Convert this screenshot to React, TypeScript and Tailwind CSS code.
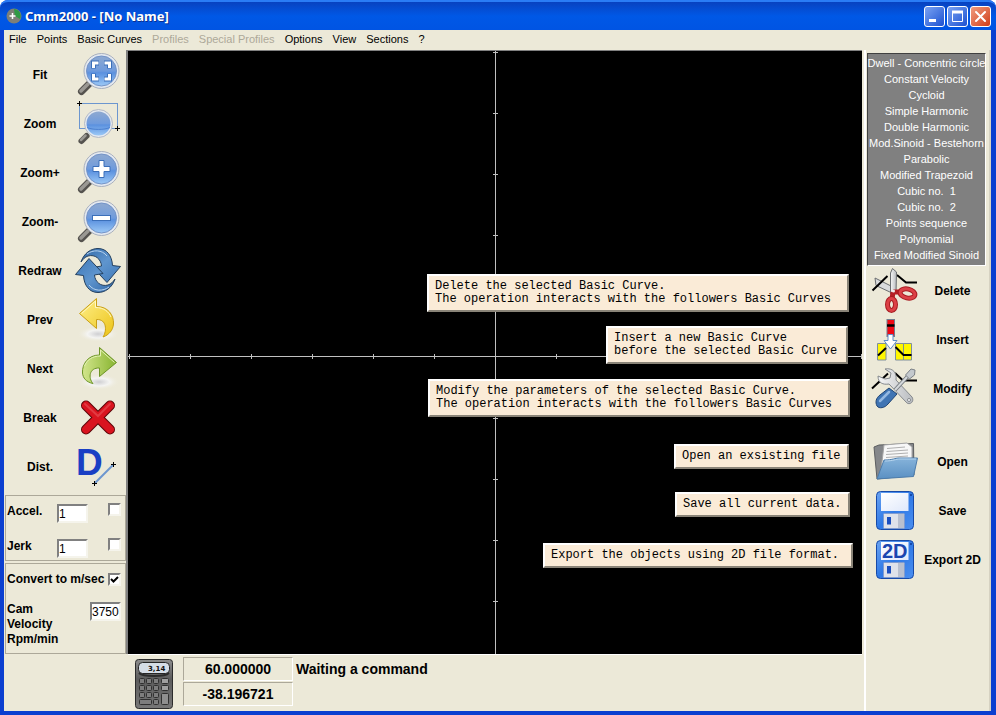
import React from 'react';

const basicCurves = [
  'Dwell - Concentric circle',
  'Constant Velocity',
  'Cycloid',
  'Simple Harmonic',
  'Double Harmonic',
  'Mod.Sinoid - Bestehorn',
  'Parabolic',
  'Modified Trapezoid',
  'Cubic no.  1',
  'Cubic no.  2',
  'Points sequence',
  'Polynomial',
  'Fixed Modified Sinoid',
];

const menuItems = [
  { label: 'File' },
  { label: 'Points' },
  { label: 'Basic Curves' },
  { label: 'Profiles', disabled: true },
  { label: 'Special Profiles', disabled: true },
  { label: 'Options' },
  { label: 'View' },
  { label: 'Sections' },
  { label: '?' },
];

const hints = [
  { text: 'Delete the selected Basic Curve.\nThe operation interacts with the followers Basic Curves', place: 'top-[223px] right-[13px] w-[422px]' },
  { text: 'Insert a new Basic Curve\nbefore the selected Basic Curve', place: 'top-[275px] right-[14px] w-[242px]' },
  { text: 'Modify the parameters of the selected Basic Curve.\nThe operation interacts with the followers Basic Curves', place: 'top-[328px] right-[12px] w-[422px]' },
  { text: 'Open an exsisting file', place: 'top-[393px] right-[13px] w-[175px]' },
  { text: 'Save all current data.', place: 'top-[441px] right-[12px] w-[175px]' },
  { text: 'Export the objects using 2D file format.', place: 'top-[492px] right-[9px] w-[310px]' },
];

const Icon = ({ children }: { children: React.ReactNode }) => (
  <svg width="48" height="48" viewBox="0 0 48 48" className="shrink-0" aria-hidden="true">
    {children}
  </svg>
);

// Gradients shared by all the icons
const IconDefs = () => (
  <svg width="0" height="0" className="absolute" aria-hidden="true">
    <defs>
      <linearGradient id="lens" x1="0" y1="0" x2="0" y2="1">
        <stop offset="0" stopColor="#8ea9d0" />
        <stop offset=".5" stopColor="#6f9bdd" />
        <stop offset=".56" stopColor="#5b91df" />
        <stop offset="1" stopColor="#9cc9f6" />
      </linearGradient>
      <linearGradient id="blueArrow" x1="0" y1="0" x2="1" y2="1">
        <stop offset="0" stopColor="#2f66a5" />
        <stop offset=".5" stopColor="#5f95ce" />
        <stop offset="1" stopColor="#3e78b8" />
      </linearGradient>
      <linearGradient id="yellowArrow" x1="0" y1="0" x2="1" y2="1">
        <stop offset="0" stopColor="#fff08a" />
        <stop offset="1" stopColor="#ecc317" />
      </linearGradient>
      <linearGradient id="greenArrow" x1="0" y1="0" x2="1" y2="0">
        <stop offset="0" stopColor="#d2e58c" />
        <stop offset="1" stopColor="#87b42f" />
      </linearGradient>
      <radialGradient id="shade">
        <stop offset="0" stopColor="#cfcfd2" />
        <stop offset=".5" stopColor="#f4f4f2" />
        <stop offset="1" stopColor="#ece9d8" stopOpacity="0" />
      </radialGradient>
      <linearGradient id="disk" x1="0" y1="0" x2="1" y2="1">
        <stop offset="0" stopColor="#6ba4f2" />
        <stop offset=".5" stopColor="#2f79e6" />
        <stop offset="1" stopColor="#4b8ff0" />
      </linearGradient>
      <linearGradient id="label" x1="0" y1="0" x2="1" y2="1">
        <stop offset="0" stopColor="#ffffff" />
        <stop offset="1" stopColor="#dfe8fb" />
      </linearGradient>
      <linearGradient id="folder" x1="0" y1="0" x2="0" y2="1">
        <stop offset="0" stopColor="#86b3da" />
        <stop offset="1" stopColor="#5a90c3" />
      </linearGradient>
      <linearGradient id="steel" x1="0" y1="0" x2="1" y2="0">
        <stop offset="0" stopColor="#f6f6f6" />
        <stop offset="1" stopColor="#b9bcc0" />
      </linearGradient>
      <linearGradient id="calc" x1="0" y1="0" x2="0" y2="1">
        <stop offset="0" stopColor="#8d8d8d" />
        <stop offset=".4" stopColor="#5c5c5c" />
        <stop offset="1" stopColor="#777777" />
      </linearGradient>
    </defs>
  </svg>
);

const Lens = ({ children }: { children?: React.ReactNode }) => (
  <Icon>
    <path d="M15 33 L7.5 40.5" stroke="#55534f" strokeWidth="7" strokeLinecap="round" />
    <path d="M14 33 L7 40" stroke="#9a9893" strokeWidth="3.5" strokeLinecap="round" />
    <circle cx="27.5" cy="20" r="17.5" fill="#e4e9f0" stroke="#a9b0bd" strokeWidth="1" />
    <circle cx="27.5" cy="20" r="15" fill="url(#lens)" stroke="#7393c7" strokeWidth="1" />
    {children}
  </Icon>
);

const FitIcon = () => (
  <Lens>
    <g fill="none">
      <path d="M19.5 17.5 V12 H25 M30 12 H35.5 V17.5 M35.5 22.500 V28 H30 M25 28 H19.5 V22.5" stroke="#3b6fb9" strokeWidth="5" />
      <path d="M19.5 17 V12 H24.5 M30.5 12 H35.5 V17 M35.5 23 V28 H30.5 M24.5 28 H19.5 V23" stroke="#fff" strokeWidth="3" />
    </g>
  </Lens>
);

const ZoomIcon = () => (
  <Icon>
    <rect x="5.5" y="3.5" width="38" height="25" fill="none" stroke="#6c96cf" />
    <path d="M12.5 36 L7.5 41" stroke="#55534f" strokeWidth="6" strokeLinecap="round" />
    <path d="M11.5 35.5 L7 40" stroke="#9a9893" strokeWidth="2.5" strokeLinecap="round" />
    <circle cx="24.5" cy="23.5" r="14" fill="#e4e9f0" stroke="#b3b9c4" />
    <circle cx="24.5" cy="23.5" r="12" fill="url(#lens)" />
    <path d="M13 27.5 C18 30 31 30 36 27.5" fill="none" stroke="#4a7fd0" />
    <path d="M5.5 1 V6 M3 3.5 H8 M43.5 26 V31 M41 28.5 H46" stroke="#000" />
  </Icon>
);

const ZoomInIcon = () => (
  <Lens>
    <path d="M25 11.5 H30 V17.5 H36 V22.5 H30 V28.5 H25 V22.5 H19 V17.5 H25 Z" fill="#fff" stroke="#3b6fb9" />
  </Lens>
);

const ZoomOutIcon = () => (
  <Lens>
    <rect x="18.5" y="17.5" width="18" height="5" fill="#fff" stroke="#3b6fb9" />
  </Lens>
);

const RedrawIcon = () => {
  const arrow = 'M7 15 C10 6 17 1.5 24 1.5 C33 1.5 38 9 38.5 18.5 L46.5 19.5 L33 35.5 L19 20.5 L27.5 19 C27 12 21 7 14 9 C11 10 9 12 7 15 Z';
  return (
    <Icon>
      <path d={arrow} fill="url(#blueArrow)" stroke="#24405f" />
      <path d="M13 7 C19 2.5 28 2.5 33 9" fill="none" stroke="#b8d3ee" />
      <g transform="rotate(180 24 23.5)">
        <path d={arrow} fill="url(#blueArrow)" stroke="#24405f" />
        <path d="M13 7 C19 2.5 28 2.5 33 9" fill="none" stroke="#b8d3ee" />
      </g>
    </Icon>
  );
};

const PrevIcon = () => (
  <Icon>
    <ellipse cx="24" cy="38" rx="21" ry="8" fill="url(#shade)" />
    <path d="M5.5 17.5 L22.5 2.5 V10.5 C34 10.5 40 19 39.5 28 C39 34 35 39 29 41 C33 35 33 23 22.5 23.5 V32.5 Z" fill="url(#yellowArrow)" stroke="#c9a016" />
    <path d="M7.5 17.5 L21.5 5 V11.5 C30 11.5 35 16 37 21" fill="none" stroke="#fff8c4" />
  </Icon>
);

const NextIcon = () => (
  <Icon>
    <ellipse cx="25" cy="37" rx="21" ry="8" fill="url(#shade)" />
    <path d="M42.5 17.5 L25.5 2.5 V10 C14 10 8 19 8.5 28 C9 33 12 37 19 38.5 C14 33 15 22.5 25.5 23 V31.5 Z" fill="url(#greenArrow)" stroke="#6c9426" />
    <path d="M40.5 17.5 L26.5 5 V11 C18 11 13 15 10.5 21" fill="none" stroke="#e3f1b4" />
  </Icon>
);

const BreakIcon = () => (
  <Icon>
    <path d="M12 11.5 L36 35.5 M36 11.5 L12 35.5" stroke="#5c0508" strokeWidth="10" strokeLinecap="round" />
    <path d="M12 11.5 L36 35.5 M36 11.5 L12 35.5" stroke="#d9141f" strokeWidth="8" strokeLinecap="round" />
    <path d="M11 10 L24 22 L36 10" fill="none" stroke="#e23a42" strokeWidth="2" strokeLinecap="round" />
  </Icon>
);

const DistIcon = () => (
  <Icon>
    <text x="2" y="32" fontSize="37" fontWeight="bold" fill="#1a3fc4" className="font-['Liberation_Sans',Arial,sans-serif]">D</text>
    <path d="M20.5 40.5 L39.5 21.5" stroke="#6c96cf" strokeWidth="2" />
    <path d="M20.5 38 V43 M18 40.5 H23 M39.5 19 V24 M37 21.5 H42" stroke="#000" />
  </Icon>
);

const DeleteIcon = () => (
  <Icon>
    <path d="M22 20 L4 11 L5 18.5 L21 26 Z" fill="#d9dbdc" stroke="#6a6d70" />
    <path d="M1.5 23.5 L16.5 9 M26 8 L35 15.5 H46" fill="none" stroke="#000" strokeWidth="2" />
    <path d="M21.5 1.5 L25.5 5 L25 26 L19.5 27 L19.5 6 Z" fill="url(#steel)" stroke="#6a6d70" />
    <path d="M22 25 L30 25 M22 25 L21 32" stroke="#b51f25" strokeWidth="5" />
    <ellipse cx="36.5" cy="26.5" rx="7.5" ry="4.5" fill="none" stroke="#a81c22" strokeWidth="5" transform="rotate(12 36.5 26.5)" />
    <ellipse cx="36.5" cy="26.5" rx="7.5" ry="4.5" fill="none" stroke="#dc4046" strokeWidth="3" transform="rotate(12 36.5 26.5)" />
    <ellipse cx="20.5" cy="37.5" rx="4" ry="6" fill="none" stroke="#a81c22" strokeWidth="5" />
    <ellipse cx="20.5" cy="37.5" rx="4" ry="6" fill="none" stroke="#dc4046" strokeWidth="3" />
    <circle cx="22.5" cy="24" r="1.5" fill="#eee" />
  </Icon>
);

const InsertIcon = () => (
  <Icon>
    <rect x="16" y="3.5" width="7.5" height="17" fill="#f00a14" stroke="#6f7f8f" />
    <path d="M16 9.5 H23.5" stroke="#000" strokeWidth="2.5" />
    <path d="M6.5 27.5 H15 V44 H6.5 Z M24.5 27.5 H32.5 V44 H24.5 Z M32.5 27.5 H40.5 V44 H32.5 Z" fill="#fff600" stroke="#7e8f9c" />
    <path d="M7 39.5 L15 32 M24.5 31 L32.5 39 H40.5" fill="none" stroke="#000" strokeWidth="2" />
    <path d="M17 18.5 H22 V24.5 H26 L19.5 33 L13 24.5 H17 Z" fill="#fff" stroke="#5f8fc9" />
  </Icon>
);

const ModifyIcon = () => (
  <Icon>
    <path d="M1 23.5 L17 8.5 M24 8 L32 15.5 H46" fill="none" stroke="#000" strokeWidth="2" />
    <path d="M14 4 L20 8 L19 13 L14 14 L7 11 C7 18 12 20 18 19 L35 37 C38 41 44 37 41 32 L25 15 C26 8 22 2.5 14 4 Z" fill="url(#steel)" stroke="#85898d" />
    <circle cx="38" cy="35" r="1.5" fill="#fff" stroke="#85898d" />
    <path d="M24 25 L37 11" stroke="#767b80" strokeWidth="4" />
    <path d="M24 25 L37 11" stroke="#d4d8db" strokeWidth="2" />
    <path d="M34.5 10 L40 4 L44 5 L43.5 10 L38.5 14 Z" fill="#c4c9cd" stroke="#7c8186" />
    <path d="M18 23 L26 29 L17 39 C14 43 8 44 6 41 C4 37 5 33 9 30 Z" fill="#3f74b3" stroke="#1f4474" />
    <path d="M18 27 L9 36" stroke="#93b8e2" strokeWidth="2.5" strokeLinecap="round" />
  </Icon>
);

const OpenIcon = () => (
  <Icon>
    <path d="M3 9 L8 7 L42.5 5.5 L43 37 L6 41 Z" fill="#85878a" stroke="#5c5e60" />
    <path d="M13 7 L36 5 L41 9 L41 30 L10 32 Z" fill="#f7f7f7" stroke="#a5a5a5" />
    <path d="M16 10.5 L34 9 M15.5 13.5 L37 12 M15 16.5 L37 15 M15 19.5 L37 18" stroke="#b0b0b0" />
    <path d="M13 22 C22 22 24 20 28 20 L46.5 20 L42.5 38.5 L6 41 Z" fill="url(#folder)" stroke="#4c7cab" />
    <path d="M14 23 C22 23 25 21 29 21 L45 21" fill="none" stroke="#b7d5ee" />
  </Icon>
);

const Disk = ({ children }: { children?: React.ReactNode }) => (
  <Icon>
    <rect x="5.5" y="4.5" width="37" height="38" rx="4" fill="url(#disk)" stroke="#174aa8" />
    <rect x="10" y="6" width="27.5" height="18" fill="url(#label)" />
    <rect x="39" y="7" width="2" height="2" fill="#174aa8" />
    <rect x="12.5" y="26.5" width="21" height="15" rx="1" fill="#dfe2ea" stroke="#7f9bd0" />
    <path d="M27 27 H33 V41 H27 Z" fill="#b9c0cf" />
    <rect x="16" y="30" width="4" height="7.5" fill="#1b4fc0" />
    {children}
  </Icon>
);

const SaveIcon = () => <Disk />;

const ExportIcon = () => (
  <Disk>
    <text x="11" y="22" fontSize="20" fontWeight="bold" fill="#1a45b0" className="font-['Liberation_Sans',Arial,sans-serif]">2D</text>
  </Disk>
);

const CalculatorIcon = () => (
  <svg width="38" height="50" viewBox="0 0 38 50" aria-hidden="true">
    <rect x=".5" y=".5" width="37" height="49" rx="3" fill="url(#calc)" stroke="#2c2c2c" />
    <rect x="3.5" y="3.5" width="31" height="11" rx="4" fill="#d5dde6" stroke="#262626" />
    <path d="M4 14 C8 18 30 18 34 14" fill="none" stroke="#2b2b2b" strokeWidth="2" />
    <text x="13" y="11.5" fontSize="7" fontWeight="bold" fill="#111" className="font-['DejaVu_Sans',sans-serif]">3,14</text>
    <g fill="#7d7d7d" stroke="#303030">
      {[20, 27, 34].map(y => (
        <React.Fragment key={y}>
          <rect x="4.5" y={y - 0.5} width="5" height="5" rx="1" />
          <rect x="11.5" y={y - 0.5} width="5" height="5" rx="1" />
          <rect x="18.5" y={y - 0.5} width="5" height="5" rx="1" />
        </React.Fragment>
      ))}
      <rect x="26.5" y="19.5" width="7" height="5" rx="1" fill="#a0a0a0" />
      <rect x="26.5" y="26.5" width="7" height="5" rx="1" fill="#a0a0a0" />
      <rect x="26.5" y="34.5" width="7" height="11" rx="1" fill="#8f8f8f" />
      <rect x="4.5" y="40.5" width="12" height="5" rx="1" />
      <rect x="18.5" y="40.5" width="5" height="5" rx="1" />
    </g>
  </svg>
);

const viewTools = [
  { label: 'Fit', icon: FitIcon },
  { label: 'Zoom', icon: ZoomIcon },
  { label: 'Zoom+', icon: ZoomInIcon },
  { label: 'Zoom-', icon: ZoomOutIcon },
  { label: 'Redraw', icon: RedrawIcon },
  { label: 'Prev', icon: PrevIcon },
  { label: 'Next', icon: NextIcon },
  { label: 'Break', icon: BreakIcon },
  { label: 'Dist.', icon: DistIcon },
];

const curveTools = [
  { label: 'Delete', icon: DeleteIcon },
  { label: 'Insert', icon: InsertIcon },
  { label: 'Modify', icon: ModifyIcon },
];

const fileTools = [
  { label: 'Open', icon: OpenIcon },
  { label: 'Save', icon: SaveIcon },
  { label: 'Export 2D', icon: ExportIcon },
];

const TitleBar = () => (
  <header className="h-[30px] shrink-0 flex items-center rounded-t-lg pl-[6px] pr-[5px] bg-linear-to-b from-[#0842c0] via-[#0058e6] to-[#0054e3] border-t-2 border-[#2a7cf6]">
    <svg width="16" height="16" viewBox="0 0 16 16" className="mr-[3px]" aria-hidden="true">
      <circle cx="8" cy="8" r="7.5" fill="#7d7f78" />
      <path d="M8 1 A7 7 0 0 1 14 11 L9 8 Z" fill="#2f9a45" />
      <path d="M6.5 5 V11 M3.5 8 H9.5" stroke="#fff" strokeWidth="1.5" />
    </svg>
    <h1 className="flex-1 text-[13px] leading-4 font-bold text-white font-['Noto_Sans',sans-serif] [text-shadow:1px_1px_#0a2f8f]">
      Cmm2000 - [No Name]
    </h1>
    <div className="flex gap-[2px]">
      <button aria-label="Minimize" className="size-[21px] rounded-[3px] border border-white bg-linear-to-br from-[#7ba2f2] to-[#1c4fd0]">
        <svg viewBox="0 0 19 19"><path d="M4 13.5 H11" stroke="#fff" strokeWidth="3" /></svg>
      </button>
      <button aria-label="Maximize" className="size-[21px] rounded-[3px] border border-white bg-linear-to-br from-[#7ba2f2] to-[#1c4fd0]">
        <svg viewBox="0 0 19 19" fill="none" stroke="#fff"><path d="M4.5 4.5 H14.5 V14.5 H4.5 Z" /><path d="M4 5 H15" strokeWidth="3" /></svg>
      </button>
      <button aria-label="Close" className="size-[21px] rounded-[3px] border border-white bg-linear-to-br from-[#f09a7c] to-[#cf3a10]">
        <svg viewBox="0 0 19 19"><path d="M5 5 L14 14 M14 5 L5 14" stroke="#fff" strokeWidth="2" strokeLinecap="round" /></svg>
      </button>
    </div>
  </header>
);

const ToolButton = ({ label, icon: ToolIcon }: { label: string; icon: React.ComponentType }) => (
  <button className="h-[49px] w-full flex items-center pl-[2px]">
    <span className="flex-1 text-center">{label}</span>
    <ToolIcon />
  </button>
);

const SideButton = ({ label, icon: ToolIcon }: { label: string; icon: React.ComponentType }) => (
  <button className="h-[49px] w-full flex items-center pl-[5px] pr-[3px]">
    <ToolIcon />
    <span className="flex-1 text-center whitespace-nowrap">{label}</span>
  </button>
);

const sunken = 'bg-white border-2 border-t-[#808080] border-l-[#808080] border-r-[#f5f4ec] border-b-[#f5f4ec]';

const ScaleRow = ({ id, label }: { id: string; label: string }) => (
  <div className="flex items-start h-[35px]">
    <label htmlFor={id} className="w-[50px]">{label}</label>
    <input id={id} type="text" defaultValue="1" className={`${sunken} w-[31px] h-[19px] mt-px font-normal text-xs`} />
    <input type="checkbox" aria-label={`Show ${label}`} className={`${sunken} appearance-none size-[13px] ml-auto mr-1`} />
  </div>
);

const LeftPanel = () => (
  <aside className="w-[124px] shrink-0 flex flex-col pr-1 border-r-2 border-[#808080] text-xs font-bold">
    <div className="mb-1">
      {viewTools.map(tool => (
        <ToolButton key={tool.label} {...tool} />
      ))}
    </div>
    <fieldset className="h-[66px] -mr-1 ml-px pl-px pt-[7px] border border-[#aca899] overflow-hidden">
      <ScaleRow id="accel" label="Accel." />
      <ScaleRow id="jerk" label="Jerk" />
    </fieldset>
    <fieldset className="flex-1 mt-[2px] -mr-1 ml-px pl-px pt-[7px] border border-[#aca899]">
      <div className="flex items-center">
        <label htmlFor="convert" className="whitespace-nowrap">Convert to m/sec</label>
        <span className="relative ml-auto mr-1 size-[13px]">
          <input id="convert" type="checkbox" defaultChecked className={`${sunken} block appearance-none size-[13px]`} />
          <svg viewBox="0 0 13 13" className="absolute inset-0 pointer-events-none" aria-hidden="true">
            <path d="M3 6 L5.5 8.5 L10 4" fill="none" stroke="#000" strokeWidth="2" />
          </svg>
        </span>
      </div>
      <div className="flex justify-between items-start mt-[15px] pr-1">
        <label htmlFor="velocity" className="w-[60px] leading-[15px]">Cam Velocity Rpm/min</label>
        <input id="velocity" type="text" defaultValue="3750" className={`${sunken} w-[31px] h-[19px] font-normal text-xs`} />
      </div>
    </fieldset>
  </aside>
);

// Axes cross at the centre, one tick every 61 units
const DrawingArea = () => {
  const ticksX = [-366, -305, -244, -183, -122, -61, 61, 122, 183, 244, 305, 366];
  const ticksY = [-305, -244, -183, -122, -61, 61, 122, 183, 244];
  return (
    <main className="relative flex-1 min-h-[604px] bg-black border-t border-[#808080] overflow-hidden">
      <svg width="100%" height="100%" className="absolute inset-0" stroke="#c0c0c0" aria-hidden="true">
        <svg x="50%" y="0" overflow="visible">
          <path d="M0.5 0 V2000 M-2000 305.5 H2000" />
          {ticksX.map(x => (
            <path key={x} d={`M${x + 0.5} 303 V308`} />
          ))}
          {ticksY.map(y => (
            <path key={y} d={`M-2 ${y + 306.5} H3`} />
          ))}
        </svg>
      </svg>
      {hints.map(hint => (
        <p
          key={hint.text}
          className={`absolute ${hint.place} pl-[6px] py-1 whitespace-pre bg-[#faebd7] border-2 border-t-white border-l-white border-r-[#8a8478] border-b-[#8a8478] text-black text-xs leading-[13px] font-['Liberation_Mono','Courier_New',monospace]`}
        >
          {hint.text}
        </p>
      ))}
    </main>
  );
};

const StatusBar = () => (
  <footer className="h-[57px] flex items-start pl-[7px] pt-[2px] border-t border-white font-bold text-sm">
    <button aria-label="Calculator" className="mt-[2px] mr-[10px]">
      <CalculatorIcon />
    </button>
    <div className="w-[110px] flex flex-col gap-px text-center leading-[22px]">
      <output className="border border-t-[#aca899] border-l-[#aca899] border-r-white border-b-white">60.000000</output>
      <output className="border border-t-[#aca899] border-l-[#aca899] border-r-white border-b-white">-38.196721</output>
    </div>
    <p className="pl-[3px] leading-6">Waiting a command</p>
  </footer>
);

const RightPanel = () => (
  <aside className="w-[127px] shrink-0 flex flex-col ml-[2px] border-l-2 border-white border-r-2 border-r-[#d6d2c2] text-xs font-bold">
    <ul className="mt-[3px] ml-px mr-[3px] h-[213px] py-px bg-[#808080] border border-t-[#404040] border-l-[#404040] border-r-white border-b-white text-[11px] leading-4 font-normal text-white text-center">
      {basicCurves.map(curve => (
        <li key={curve} className="flex justify-center">
          <button className="whitespace-pre">{curve}</button>
        </li>
      ))}
    </ul>
    <div className="mb-6">
      {curveTools.map(tool => (
        <SideButton key={tool.label} {...tool} />
      ))}
    </div>
    <div>
      {fileTools.map(tool => (
        <SideButton key={tool.label} {...tool} />
      ))}
    </div>
  </aside>
);

const App = () => {
  return (
    <div className="min-h-screen flex flex-col rounded-t-lg bg-[#0b3fd0] font-['Liberation_Sans',Arial,sans-serif] text-black">
      <IconDefs />
      <TitleBar />
      <div className="flex-1 flex flex-col ml-1 mr-[5px] mb-1 bg-[#ece9d8]">
        <nav className="h-5 shrink-0 flex items-center gap-[10px] pl-[5px] pb-[2px] text-[11px] leading-4">
          {menuItems.map(item => (
            <button key={item.label} disabled={item.disabled} className="disabled:text-[#aca899]">
              {item.label}
            </button>
          ))}
        </nav>
        <div className="flex-1 flex">
          <div className="flex-1 flex flex-col">
            <div className="flex-1 flex">
              <LeftPanel />
              <DrawingArea />
            </div>
            <div className="pl-[124px]">
              <StatusBar />
            </div>
          </div>
          <RightPanel />
        </div>
      </div>
    </div>
  );
};

export default App;
